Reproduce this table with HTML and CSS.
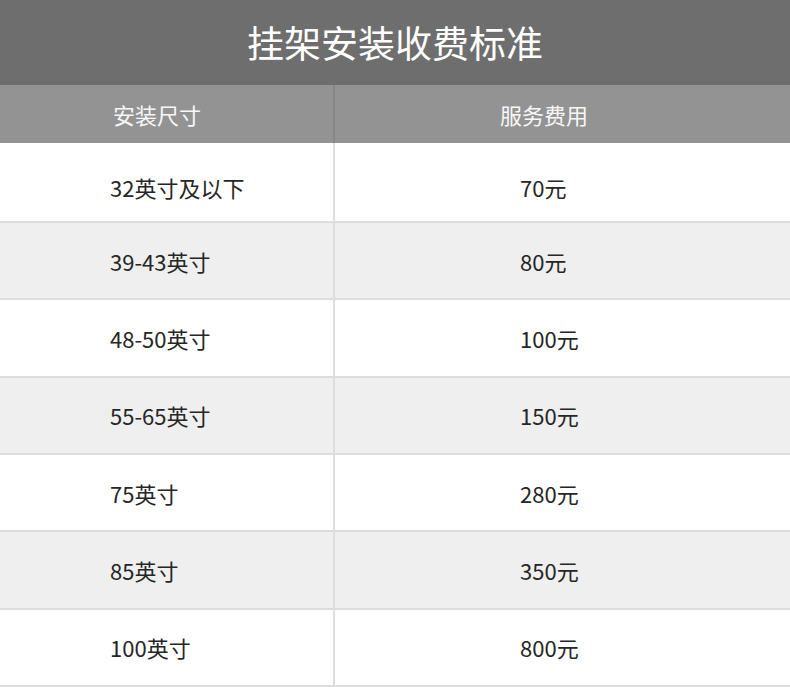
FILE: index.html
```html
<!DOCTYPE html>
<html lang="zh-CN">
<head>
<meta charset="utf-8">
<title>挂架安装收费标准</title>
<link rel="stylesheet" href="styles.css">
</head>
<body>
<div class="page">
  <div class="title">挂架安装收费标准</div>
  <div class="head">
    <div class="hcell hleft">安装尺寸</div>
    <div class="hcell hright">服务费用</div>
  </div>
  <div class="row first">
    <div class="cell left">32英寸及以下</div>
    <div class="cell right">70元</div>
  </div>
  <div class="row alt">
    <div class="cell left">39-43英寸</div>
    <div class="cell right">80元</div>
  </div>
  <div class="row">
    <div class="cell left">48-50英寸</div>
    <div class="cell right">100元</div>
  </div>
  <div class="row alt">
    <div class="cell left">55-65英寸</div>
    <div class="cell right">150元</div>
  </div>
  <div class="row">
    <div class="cell left">75英寸</div>
    <div class="cell right">280元</div>
  </div>
  <div class="row alt">
    <div class="cell left">85英寸</div>
    <div class="cell right">350元</div>
  </div>
  <div class="row">
    <div class="cell left">100英寸</div>
    <div class="cell right">800元</div>
  </div>
</div>
</body>
</html>
```

FILE: styles.css
```css
html, body {
  margin: 0;
  padding: 0;
  background: #ffffff;
}

.page {
  width: 790px;
  font-family: "Noto Sans CJK SC", "Noto Sans", sans-serif;
}

.title {
  height: 85px;
  background: #6e6e6e;
  color: #ffffff;
  font-size: 37px;
  display: flex;
  align-items: center;
  justify-content: center;
  padding-bottom: 2px;
  box-sizing: border-box;
}

.head {
  height: 58px;
  background: #939393;
  display: grid;
  grid-template-columns: 335px 1fr;
  color: #f7f7f7;
  font-size: 22px;
}

.hcell {
  display: flex;
  align-items: center;
}

.hleft {
  border-right: 2px solid #878787;
  padding-left: 113px;
}

.hright {
  padding-left: 165px;
}

.row {
  display: grid;
  grid-template-columns: 335px 1fr;
  height: 75.34px;
  border-bottom: 2px solid #dddddd;
  color: #262626;
  font-size: 22px;
}

.row.first {
  height: 78px;
}

.row.first .cell {
  padding-top: 9px;
}

.row.alt {
  background: #efefef;
}

.cell {
  display: flex;
  align-items: center;
}

.left {
  border-right: 2px solid #dddddd;
  padding-left: 110px;
}

.right {
  padding-left: 185px;
}
```
